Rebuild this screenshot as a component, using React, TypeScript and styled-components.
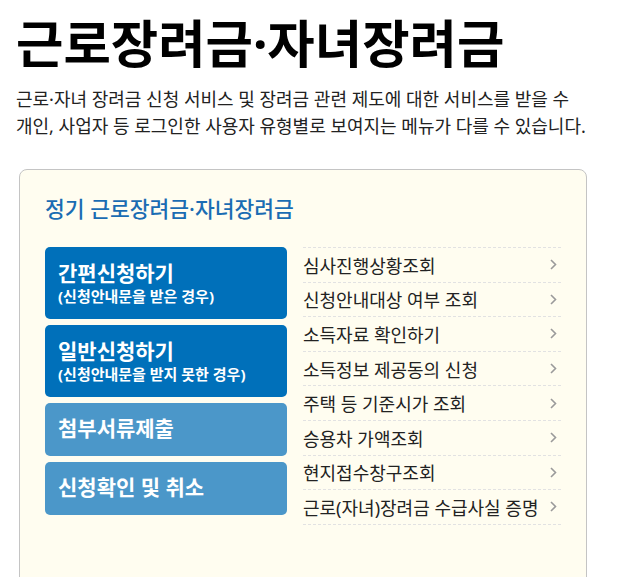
import React from "react";
import styled, { createGlobalStyle } from "styled-components";

const Global = createGlobalStyle`
  html, body { margin: 0; padding: 0; background: #fff; }
  body { font-family: "Noto Sans", "Noto Sans CJK KR", sans-serif; color: #111; }
`;

const Page = styled.div`
  padding: 8px 0 0 16px;
  width: 610px;
`;

const Title = styled.h1`
  margin: 0;
  font-size: 51.5px;
  font-weight: 700;
  line-height: 70px;
  color: #000;
`;

const Desc = styled.p`
  margin: 8px 0 0;
  font-size: 18px;
  line-height: 27px;
  color: #222;
`;

const Box = styled.section`
  margin: 29px 0 0 3px;
  width: 568px;
  height: 420px;
  box-sizing: border-box;
  border: 1px solid #c4c4c4;
  border-radius: 8px;
  background: #fffdf0;
  padding: 24px 24px 0 25px;
`;

const BoxTitle = styled.h2`
  margin: 0 0 23px;
  font-size: 21.5px;
  font-weight: 500;
  line-height: 30px;
  color: #1a6cb3;
`;

const Cols = styled.div`
  display: grid;
  grid-template-columns: 242px 258px;
  column-gap: 16px;
  align-items: start;
`;

const BtnCol = styled.div`
  display: flex;
  flex-direction: column;
  gap: 6px;
`;

const Btn = styled.a<{ $light?: boolean; $tall?: boolean }>`
  display: flex;
  flex-direction: column;
  justify-content: center;
  box-sizing: border-box;
  height: ${(p) => (p.$tall ? "72px" : "53px")};
  padding: 0 13px 2px;
  border-radius: 5px;
  background: ${(p) => (p.$light ? "#4b97c9" : "#0070ba")};
  color: #fff;
  text-decoration: none;
`;

const BtnMain = styled.span`
  font-size: 21px;
  font-weight: 700;
  line-height: 27px;
`;

const BtnSub = styled.span`
  font-size: 15px;
  font-weight: 700;
  line-height: 18px;
`;

const List = styled.ul`
  list-style: none;
  margin: 0;
  padding: 0;
  border-top: 1px dashed #e2e2e2;
`;

const Item = styled.li`
  display: flex;
  align-items: center;
  justify-content: space-between;
  height: 33.6px;
  border-bottom: 1px dashed #e2e2e2;
  padding-right: 4px;
  font-size: 18px;
  color: #222;
`;

const Chevron = () => (
  <svg width="7" height="11" viewBox="0 0 7 11">
    <path d="M1 1 L5.5 5.5 L1 10" fill="none" stroke="#9a9a9a" strokeWidth="1.6" />
  </svg>
);

const items = [
  "심사진행상황조회",
  "신청안내대상 여부 조회",
  "소득자료 확인하기",
  "소득정보 제공동의 신청",
  "주택 등 기준시가 조회",
  "승용차 가액조회",
  "현지접수창구조회",
  "근로(자녀)장려금 수급사실 증명",
];

export default function App() {
  return (
    <Page>
      <Global />
      <Title>근로장려금·자녀장려금</Title>
      <Desc>
        근로·자녀 장려금 신청 서비스 및 장려금 관련 제도에 대한 서비스를 받을 수
        <br />
        개인, 사업자 등 로그인한 사용자 유형별로 보여지는 메뉴가 다를 수 있습니다.
      </Desc>
      <Box>
        <BoxTitle>정기 근로장려금·자녀장려금</BoxTitle>
        <Cols>
          <BtnCol>
            <Btn $tall>
              <BtnMain>간편신청하기</BtnMain>
              <BtnSub>(신청안내문을 받은 경우)</BtnSub>
            </Btn>
            <Btn $tall>
              <BtnMain>일반신청하기</BtnMain>
              <BtnSub>(신청안내문을 받지 못한 경우)</BtnSub>
            </Btn>
            <Btn $light>
              <BtnMain>첨부서류제출</BtnMain>
            </Btn>
            <Btn $light>
              <BtnMain>신청확인 및 취소</BtnMain>
            </Btn>
          </BtnCol>
          <List>
            {items.map((t) => (
              <Item key={t}>
                <span>{t}</span>
                <Chevron />
              </Item>
            ))}
          </List>
        </Cols>
      </Box>
    </Page>
  );
}
